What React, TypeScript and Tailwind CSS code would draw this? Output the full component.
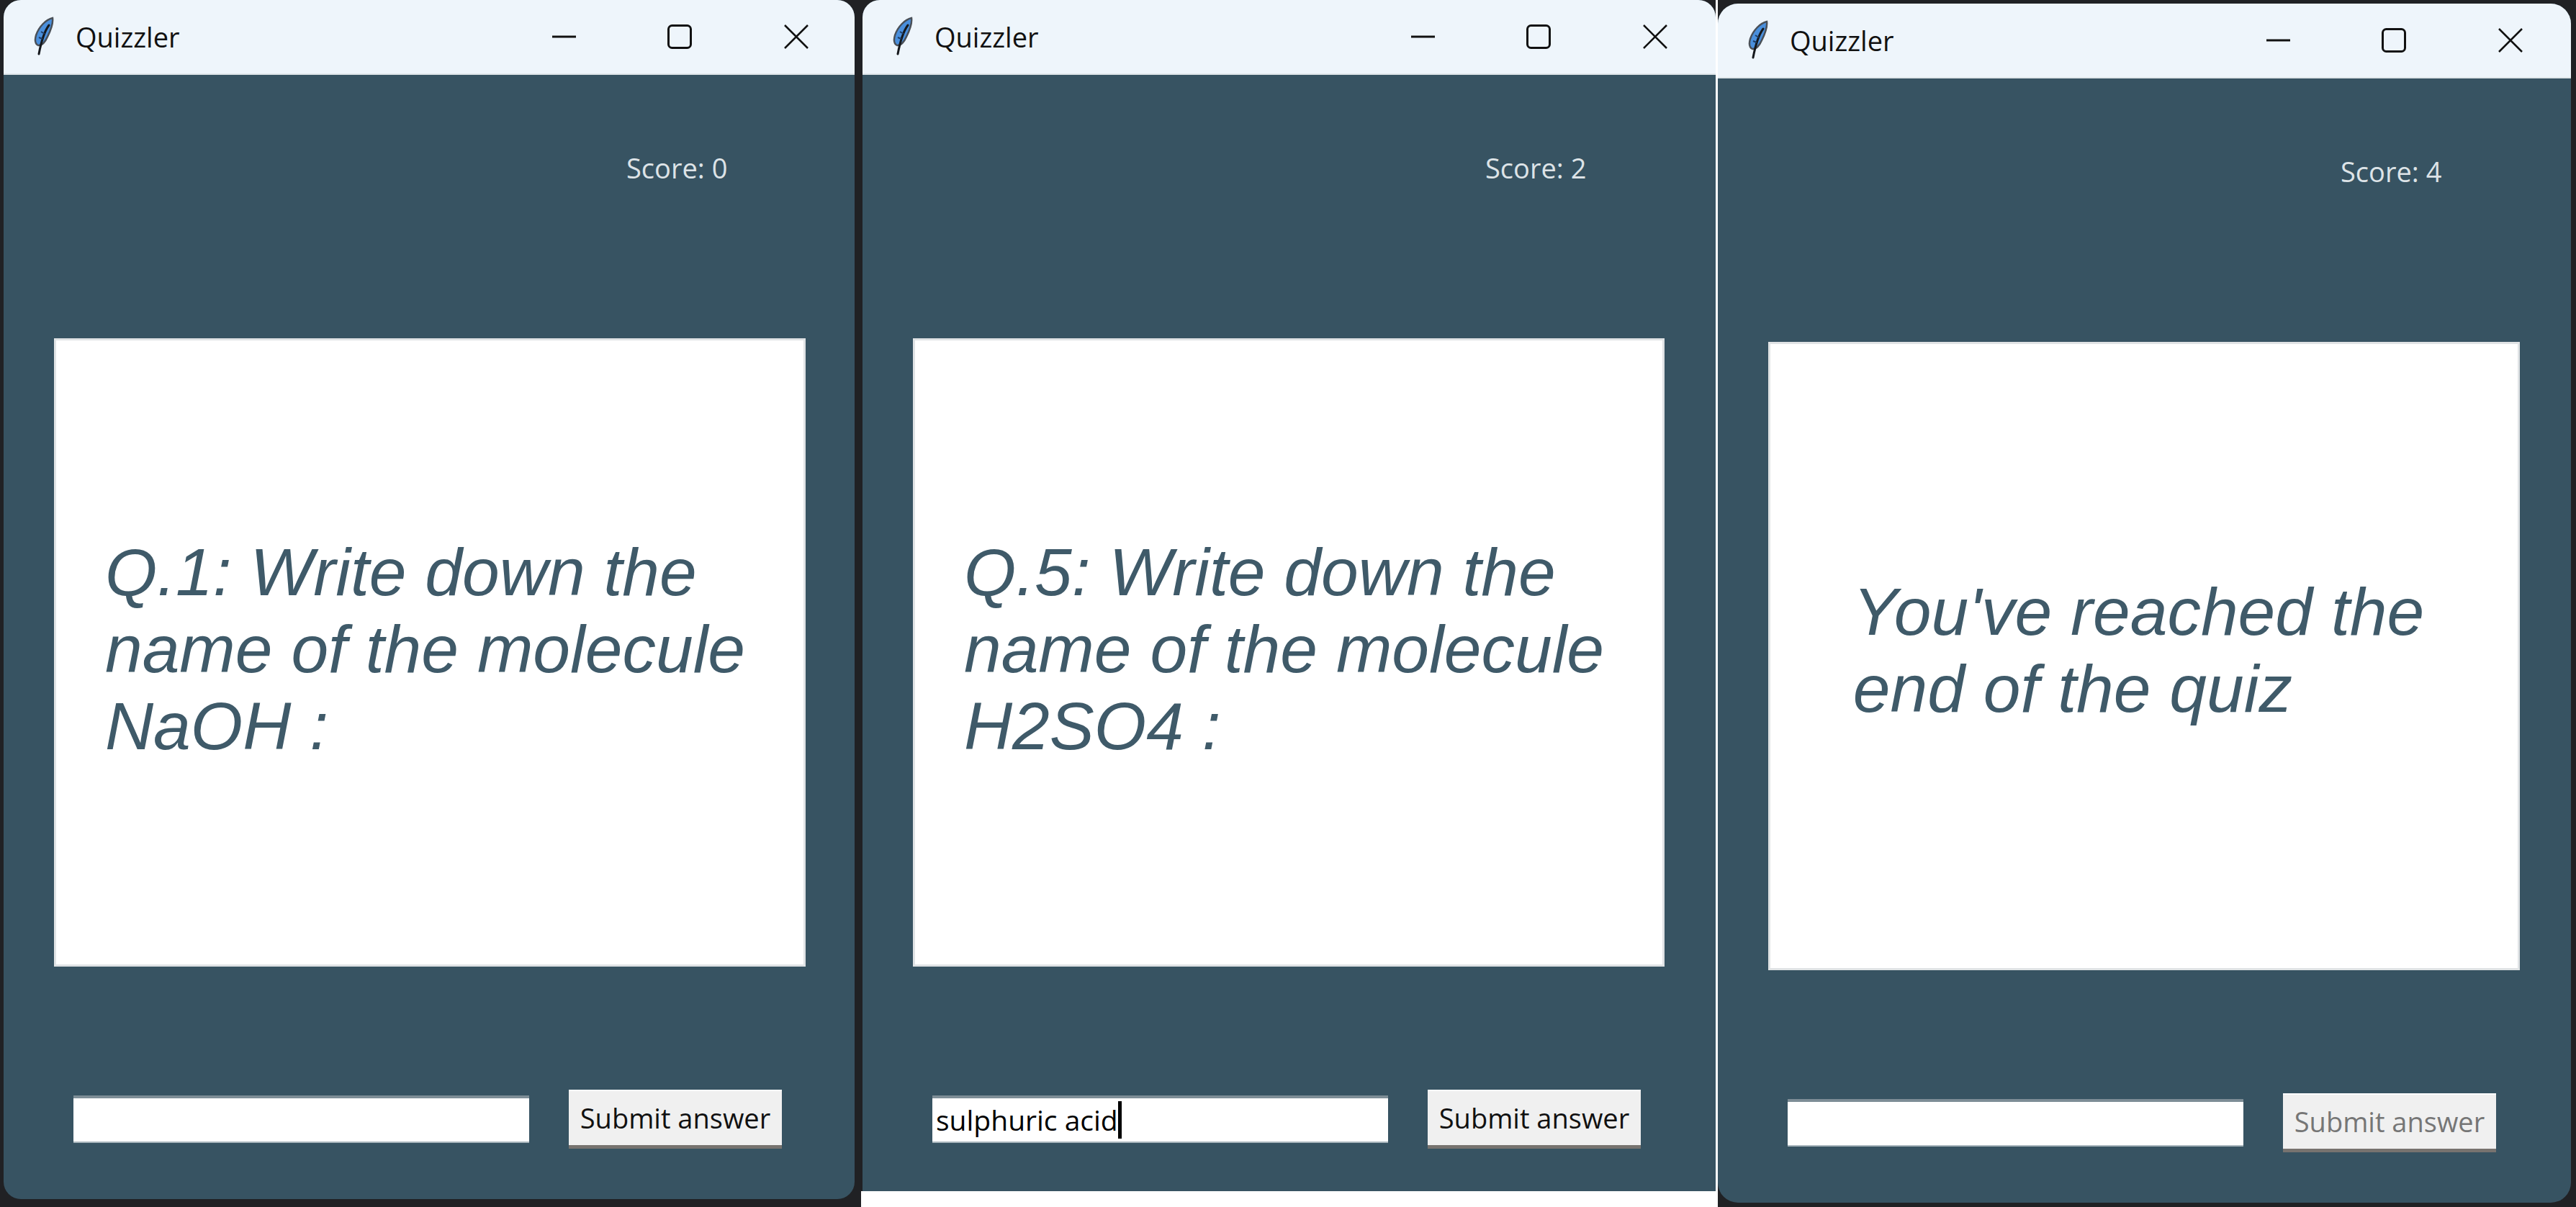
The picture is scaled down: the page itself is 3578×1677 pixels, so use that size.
const THEME = "bg-[#375362]";

type WindowProps = {
  score: number;
  lines: string[];
  answer?: string;
  disabled?: boolean;
  className: string;
  textClassName: string;
};

const Feather = () => (
  <svg width="30" height="56" viewBox="0 0 30 56" className="shrink-0">
    <path d="M27 2 C18 4 8 14 4 26 C2 33 3 38 7 40 C12 41 17 35 20 28 C25 18 28 9 27 2 Z" fill="#4a8fdc" stroke="#4a5058" strokeWidth="2.5" />
    <path d="M22 12 C16 20 12 31 8 52" fill="none" stroke="#15181c" strokeWidth="3" strokeLinecap="round" />
    <path d="M8 29 L13 31 M11 21 L16 24" stroke="#1d3d66" strokeWidth="2" />
  </svg>
);

const TitleBar = () => (
  <div className="flex h-[104px] shrink-0 items-center border-b-2 border-[#dfe6ea] bg-[#eef5fb]">
    <div className="flex w-[762px] items-center pl-[41px]">
      <Feather />
      <span className="ml-[29px] font-['Open_Sans',sans-serif] text-[38px] text-[#111]">Quizzler</span>
    </div>
    <div className="flex items-center">
      <svg width="33" height="34" viewBox="0 0 33 34">
        <path d="M0 17 H33" stroke="#111" strokeWidth="3" />
      </svg>
      <svg width="34" height="34" viewBox="0 0 34 34" className="ml-[127px]">
        <rect x="1.5" y="1.5" width="31" height="31" rx="5" fill="none" stroke="#111" strokeWidth="3" />
      </svg>
      <svg width="34" height="34" viewBox="0 0 34 34" className="ml-[128px]">
        <path d="M1 1 L33 33 M33 1 L1 33" stroke="#111" strokeWidth="2.5" />
      </svg>
    </div>
  </div>
);

const QuizWindow = ({ score, lines, answer, disabled, className, textClassName }: WindowProps) => (
  <div className={`flex shrink-0 flex-col overflow-hidden ${THEME} ${className}`}>
    <TitleBar />
    <div className="flex flex-1 flex-col">
      <div className="mt-[105px] h-[48px] pl-[865px] font-['Open_Sans',sans-serif] text-[38px] leading-[48px] text-[#dde3e7]">
        Score: {score}
      </div>
      <div className={`ml-[70px] mt-[213px] flex h-[873px] w-[1044px] items-center justify-center border-[3px] border-[#e0e3e5] bg-white font-['Liberation_Sans',sans-serif] text-[93px] italic leading-[107px] text-[#3f5a69] ${textClassName}`}>
        <div>
          {lines.map((line) => (
            <div key={line} className="whitespace-nowrap">
              {line}
            </div>
          ))}
        </div>
      </div>
      <div className="mt-[171px] flex items-center pl-[97px]">
        <div className="flex h-[66px] w-[633px] items-center border-t-[4px] border-b-2 border-t-[#7d8d96] border-b-[#a9b6bd] bg-white pl-[5px] font-['Open_Sans',sans-serif] text-[39px] text-black">
          {answer}
          {answer && <span className="h-[52px] w-[5px] bg-black" />}
        </div>
        <button
          className={`ml-[55px] h-[82px] w-[296px] border-t-2 border-b-[5px] border-t-white border-b-[#77736f] bg-[#f0f0f0] font-['Open_Sans',sans-serif] text-[38px] ${disabled ? "text-[#767676]" : "text-[#111]"}`}
        >
          Submit answer
        </button>
      </div>
    </div>
  </div>
);

export default function App() {
  return (
    <div className="flex h-[1677px] w-[3578px] items-start overflow-hidden bg-[#202124] pl-[5px]">
      <QuizWindow
        score={0}
        lines={["Q.1: Write down the", "name of the molecule", "NaOH :"]}
        className="h-[1666px] w-[1182px] rounded-[24px]"
        textClassName="pr-[13px] pb-[9px]"
      />
      <div className="ml-[9px] flex shrink-0 flex-col">
        <QuizWindow
          score={2}
          lines={["Q.5: Write down the", "name of the molecule", "H2SO4 :"]}
          answer="sulphuric acid"
          className="ml-[2px] h-[1655px] w-[1185px] rounded-t-[24px]"
          textClassName="pr-[13px] pb-[9px]"
        />
        <div className="h-[22px] w-[1187px] bg-white" />
      </div>
      <div className="h-[1677px] w-[3px] shrink-0 bg-white" />
      <QuizWindow
        score={4}
        lines={["You've reached the", "end of the quiz"]}
        disabled
        className="mt-[5px] h-[1666px] w-[1185px] rounded-[28px]"
        textClassName="pr-[15px] pb-[16px]"
      />
    </div>
  );
}
